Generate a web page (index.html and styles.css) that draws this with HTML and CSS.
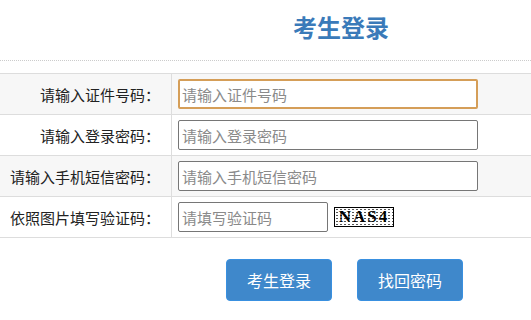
FILE: index.html
```html
<!DOCTYPE html>
<html lang="zh-CN">
<head>
  <meta charset="UTF-8">
  <meta name="viewport" content="width=device-width, initial-scale=1.0">
  <title>考生登录</title>
  <link rel="stylesheet" href="styles.css">
</head>
<body>
  <h1 class="title">考生登录</h1>

  <div class="login-form">
    <div class="row shaded">
      <label class="label" for="card-no">请输入证件号码：</label>
      <div class="field">
        <input type="text" id="card-no" class="text-input focused" placeholder="请输入证件号码">
      </div>
    </div>
    <div class="row">
      <label class="label" for="password">请输入登录密码：</label>
      <div class="field">
        <input type="password" id="password" class="text-input" placeholder="请输入登录密码">
      </div>
    </div>
    <div class="row shaded">
      <label class="label" for="sms-code">请输入手机短信密码：</label>
      <div class="field">
        <input type="password" id="sms-code" class="text-input" placeholder="请输入手机短信密码">
      </div>
    </div>
    <div class="row">
      <label class="label" for="captcha">依照图片填写验证码：</label>
      <div class="field">
        <input type="text" id="captcha" class="text-input short" placeholder="请填写验证码">
        <span class="captcha">NAS4</span>
      </div>
    </div>
  </div>

  <div class="actions">
    <button class="btn">考生登录</button>
    <button class="btn">找回密码</button>
  </div>
</body>
</html>
```

FILE: styles.css
```css
/* login page */
body {
  margin: 0;
  font-family: "Noto Sans CJK SC", "Liberation Sans", sans-serif;
  color: #222;
  background: #fff;
}
.title {
  margin: 0;
  height: 49px;
  padding: 11px 0 0 293px;
  border-bottom: 1px dotted #ccc;
  font-size: 24px;
  line-height: 32px;
  font-weight: bold;
  color: #3a7ab9;
}
.login-form {
  margin-top: 12px;
  border-bottom: 1px solid #ddd;
}
.row {
  display: grid;
  grid-template-columns: 172px 1fr;
  height: 40px;
  border-top: 1px solid #ddd;
}
.shaded {
  background-color: #f7f7f7;
}
.label {
  display: flex;
  align-items: center;
  justify-content: flex-end;
  padding-right: 11px;
  border-right: 1px solid #ddd;
  font-size: 15px;
  white-space: nowrap;
}
.field {
  display: flex;
  align-items: center;
  gap: 6px;
  padding-left: 6px;
}
.text-input {
  box-sizing: border-box;
  width: 300px;
  height: 30px;
  padding: 0 3px;
  border: 1px solid #767676;
  border-radius: 2px;
  background: #fff;
  font-family: inherit;
  font-size: 15px;
  color: #222;
  outline: none;
}
.text-input::placeholder {
  color: #8a8a8a;
}
.text-input.focused {
  border: 2px solid #d59e58;
  padding-left: 2px;
}
.text-input.short {
  width: 150px;
}
.captcha {
  box-sizing: border-box;
  width: 60px;
  height: 20px;
  border: 1px solid #000;
  background-color: #fff;
  background-image: radial-gradient(#555 0.6px, transparent 0.8px);
  background-size: 4px 3px;
  font-family: "Liberation Serif", serif;
  font-weight: bold;
  font-size: 17px;
  line-height: 18px;
  letter-spacing: 2px;
  text-align: center;
  color: #000;
}
.actions {
  display: flex;
  gap: 25px;
  padding: 21px 0 0 226px;
}
.btn {
  width: 106px;
  height: 42px;
  border: 1px solid #3990e0;
  border-radius: 4px;
  background-color: #3f88cb;
  color: #fff;
  font-family: inherit;
  font-size: 16px;
  cursor: pointer;
}
```
